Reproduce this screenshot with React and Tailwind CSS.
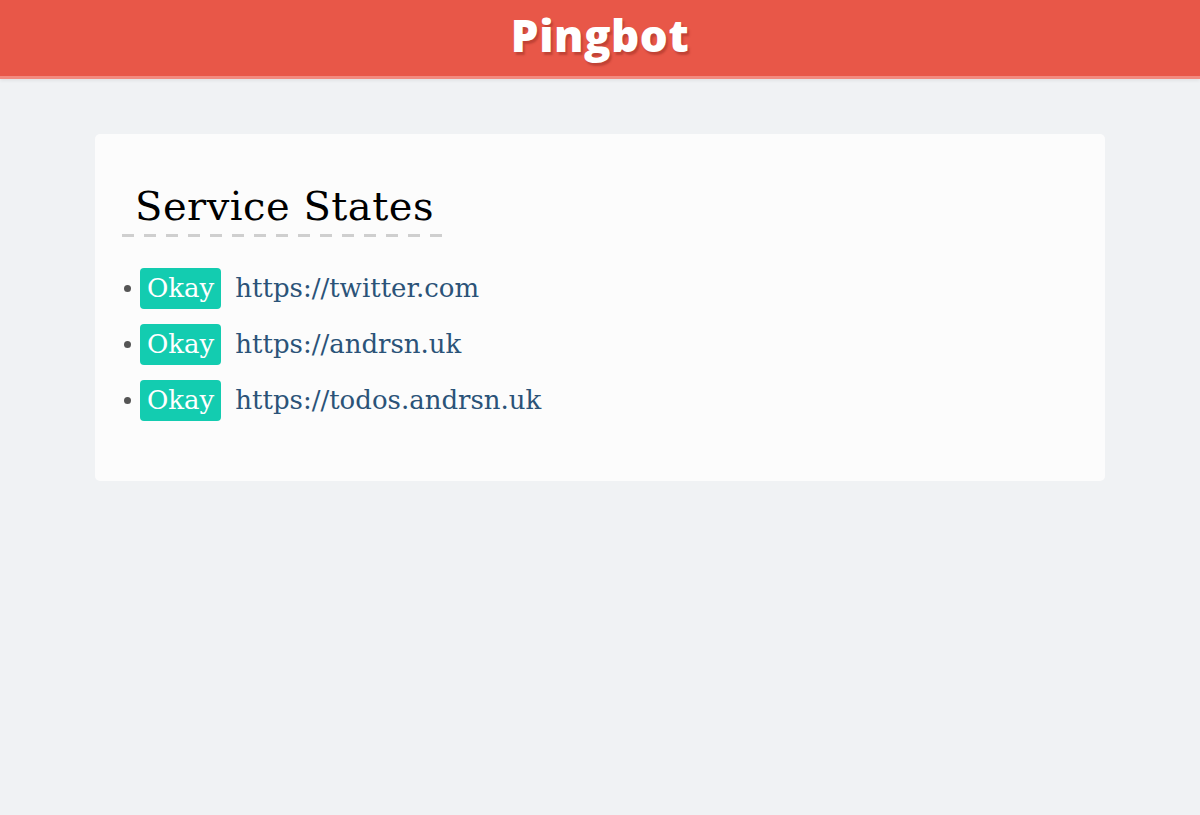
import React from 'react'

const services = [
  { url: 'https://twitter.com', state: 'Okay' },
  { url: 'https://andrsn.uk', state: 'Okay' },
  { url: 'https://todos.andrsn.uk', state: 'Okay' },
]

const App = () => {
  return (
    <div className="min-h-screen bg-[#f0f2f4]">
      <header className="h-[79px] bg-[#e85748] border-b-[3px] border-[#f28a7f] shadow-[0_2px_3px_rgba(0,0,0,0.06)] flex justify-center">
        <h1 className="mt-[7px] text-[44px] leading-[56px] font-extrabold text-white tracking-[0.5px] [font-family:'Open_Sans',sans-serif] [text-shadow:2px_3px_2px_rgba(120,30,20,0.35)]">
          Pingbot
        </h1>
      </header>

      <main className="px-[95px] pt-[55px]">
        <section className="bg-[#fcfcfc] rounded-[5px] pt-[45px] pb-[60px] px-[27px] [font-family:'DejaVu_Serif',serif]">
          <h2 className="inline-block relative pl-[13px] pr-[17px] text-[40px] leading-[54px] tracking-[0.5px] text-black">
            Service States
            <span className="absolute left-0 right-0 -bottom-[4px] h-[3px] bg-[repeating-linear-gradient(90deg,#cfcfcf_0,#cfcfcf_12px,transparent_12px,transparent_22px)]" />
          </h2>

          <ul className="mt-[35px] flex flex-col gap-[15px]">
            {services.map((s) => (
              <li key={s.url} className="flex items-center">
                <span className="w-[7px] h-[7px] rounded-full bg-[#555] ml-[2px] mr-[9px]" />
                <span className="h-[41px] px-[7px] rounded-[4px] bg-[#13ccb0] text-white text-[26px] leading-[41px]">
                  {s.state}
                </span>
                <a className="ml-[14px] text-[26px] leading-[41px] text-[#2b5378]">{s.url}</a>
              </li>
            ))}
          </ul>
        </section>
      </main>
    </div>
  )
}

export default App
